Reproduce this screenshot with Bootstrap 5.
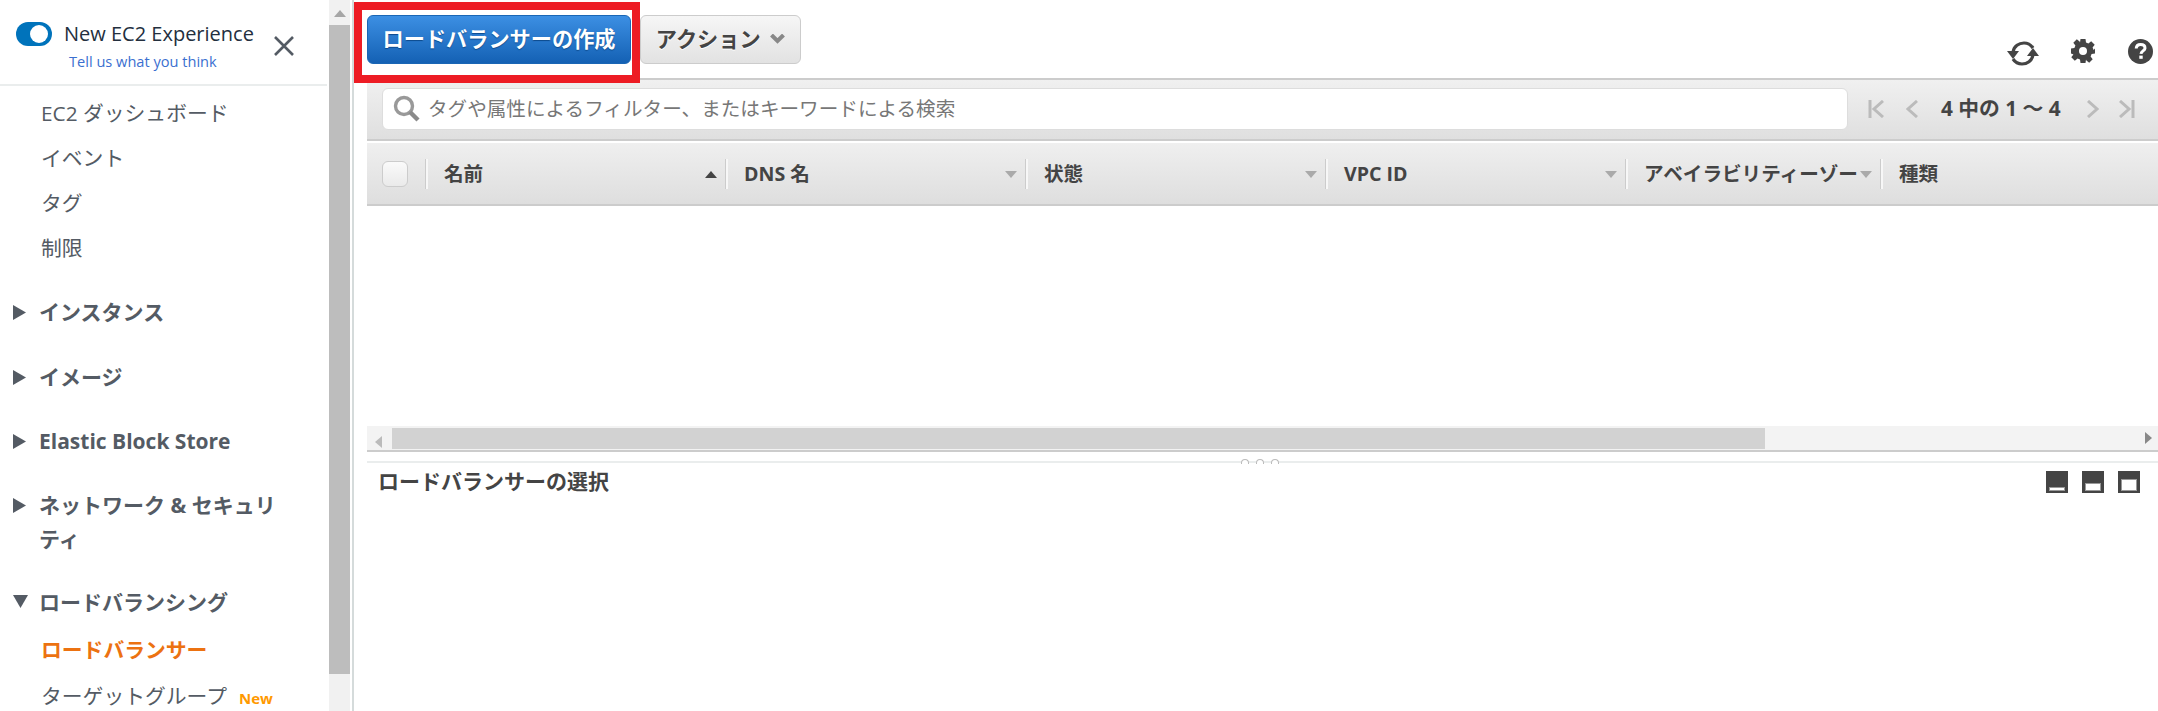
<!DOCTYPE html>
<html lang="ja">
<head>
  <meta charset="UTF-8">
  <meta name="viewport" content="width=device-width, initial-scale=1.0">
  <title>ロードバランサー</title>
  <link rel="stylesheet" href="https://cdn.jsdelivr.net/npm/bootstrap@5.3.0/dist/css/bootstrap.min.css">
  <style>
    html, body { height: 711px; overflow: hidden; }
    body { font-family: "Open Sans", "Noto Sans CJK JP", sans-serif; color: #444; background: #fff; }
    .side-panel { width: 327px; height: 711px; flex: none; overflow: hidden; }
    .xp-head { height: 86px; border-bottom: 2px solid #eaeded; padding: 22px 0 0 16px; position: relative; }
    .xp-toggle { width: 36px; height: 24px; border-radius: 12px; background: #0073bb; position: relative; flex: none; }
    .xp-toggle::after { content: ""; position: absolute; right: 4px; top: 3px; width: 18px; height: 18px; border-radius: 50%; background: #fff; }
    .xp-title { font-size: 20px; line-height: 24px; color: #232f3e; margin-left: 12px; white-space: nowrap; }
    .xp-link { font-size: 14.6px; line-height: 20px; color: #3b6fd0; margin: 5px 0 0 53px; white-space: nowrap; text-decoration: none; display: block; }
    .xp-close { position: absolute; left: 274px; top: 36px; }
    .side-links { padding-top: 5px; }
    .side-item { font-size: 20.8px; line-height: 45px; height: 45px; padding-left: 41px; color: #545b64; white-space: nowrap; }
    .side-item.active-item { color: #ec7211; font-weight: 700; height: 48px; line-height: 48px; }
    .new-tag { font-size: 15px; font-weight: 700; color: #ff9900; margin-left: 12px; }
    .side-group { font-size: 21px; line-height: 34px; font-weight: 700; color: #545b64; padding-left: 39px; position: relative; width: 290px; }
    .side-group svg { position: absolute; left: 13px; top: 10px; }
    .g1 { margin-top: 24px; }
    .g2 { margin-top: 31px; }
    .g3 { margin-top: 30px; }
    .g4 { margin-top: 30px; }
    .g5 { margin-top: 29px; margin-bottom: 7px; }
    .side-bar { width: 27px; flex: none; height: 711px; border-right: 2px solid #d5dbdb; padding-left: 2px; padding-right: 2px; background: #fff; }
    .bar-up { height: 25px; background: #f1f1f1; display: flex; justify-content: center; padding-top: 10px; }
    .bar-thumb { height: 649px; background: #bdbdbd; }
    .bar-rest { height: 37px; background: #f1f1f1; }
    .main-pane { flex: 1 1 auto; min-width: 0; position: relative; height: 711px; padding-left: 13px; }
    .red-frame { position: absolute; left: 0; top: 2px; width: 286px; height: 81px; border: 8px solid #ed1c24; pointer-events: none; }
    .top-row { height: 78px; padding-top: 15px; }
    .btn-make, .btn-act { height: 49px; padding: 0 0 2px; font-size: 21.2px; font-weight: 700; border-radius: 6px; white-space: nowrap; }
    .btn-make { width: 264px; color: #fff; background: linear-gradient(#3c8fe3, #1461b4); border: 1px solid #1a66b5; text-shadow: 0 1px 1px #0d4a8c; }
    .btn-act { width: 161px; margin-left: 9px; color: #444; background: linear-gradient(#f6f6f6, #e2e2e2); border: 1px solid #ccc; text-shadow: 0 1px 0 #fff; }
    .act-arrow { margin-left: 4px; vertical-align: 3px; }
    .top-icons { position: absolute; right: 0; top: 0; width: 160px; height: 78px; }
    .top-icons svg { position: absolute; }
    .ic-refresh { left: 9px; top: 41px; }
    .ic-gear { left: 73px; top: 39px; }
    .ic-help { left: 130px; top: 39px; }
    .filter-row { height: 63px; background: linear-gradient(#f0f0f0, #dfdfdf); border-top: 2px solid #ccc; border-bottom: 2px solid #ccc; padding-left: 15px; padding-bottom: 2px; }
    .search-box { width: 1466px; height: 42px; background: #fff; border: 1px solid #ddd; border-radius: 6px; padding-left: 10px; flex: none; }
    .search-text { font-size: 19.6px; color: #777; margin-left: 8px; white-space: nowrap; }
    .pager { width: 306px; flex: none; position: relative; height: 59px; }
    .pager svg { position: absolute; top: 21px; }
    .pg-first { left: 20px; }
    .pg-prev { left: 58px; }
    .pg-next { left: 239px; }
    .pg-last { left: 271px; }
    .pager-text { position: absolute; left: 93px; top: 0; line-height: 59px; font-size: 20.8px; font-weight: 700; color: #444; white-space: nowrap; }
    .head-row { height: 63px; margin-top: 2px; background: linear-gradient(#efefef, #dedede); border-bottom: 2px solid #ccc; }
    .check-cell { width: 59px; flex: none; height: 100%; padding-left: 15px; }
    .fake-check { width: 26px; height: 26px; border: 1px solid #ccc; border-radius: 6px; background: linear-gradient(#fafafa, #eaeaea); }
    .head-cell { width: 300px; flex: none; height: 30px; border-left: 2px solid #f7f7f7; box-shadow: -1px 0 0 #ccc; padding-left: 16px; font-size: 19.6px; font-weight: 700; line-height: 30px; color: #444; white-space: nowrap; position: relative; }
    .head-cell svg { position: absolute; right: 9px; top: 12px; }
    .cell-narrow { width: 255px; }
    .table-space { height: 220px; }
    .hscroll { height: 26px; background: #f3f3f3; border-bottom: 2px solid #ccc; padding-top: 2px; }
    .hscroll-left { width: 25px; flex: none; padding-left: 8px; }
    .hscroll-thumb { width: 1373px; height: 21px; background: #d2d2d2; flex: none; }
    .hscroll-right { position: absolute; right: 6px; top: 432px; }
    .detail-row { margin-top: 9px; border-top: 2px solid #eaeded; position: relative; height: 60px; padding-left: 11px; }
    .detail-title { font-size: 21px; font-weight: 700; color: #444; line-height: 36px; white-space: nowrap; }
    .dots { position: absolute; left: 874px; top: -4px; display: flex; gap: 7px; }
    .dots i { display: block; width: 8px; height: 5px; border: 1px solid #bbb; border-bottom: 0; border-radius: 4px 4px 0 0; background: #fff; }
    .pane-icons { position: absolute; right: 18px; top: 8px; display: flex; gap: 14px; }
    .pane-icon { width: 22px; height: 22px; background: #444; position: relative; }
    .pane-icon i { position: absolute; left: 3px; right: 3px; bottom: 2px; background: #fff; border: 1px solid #999; }
    .h1p i { height: 4px; }
    .h2p i { height: 8px; }
    .h3p i { height: 12px; }
  </style>
</head>
<body>
  <div class="d-flex">
    <div class="side-panel">
      <div class="xp-head">
        <div class="d-flex align-items-center">
          <span class="xp-toggle"></span>
          <span class="xp-title">New EC2 Experience</span>
        </div>
        <a class="xp-link" href="#">Tell us what you think</a>
        <svg class="xp-close" width="20" height="20" viewBox="0 0 20 20"><path d="M1 1L19 19M19 1L1 19" stroke="#545b64" stroke-width="2.6" fill="none"/></svg>
      </div>
      <div class="side-links">
        <div class="side-item">EC2 ダッシュボード</div>
        <div class="side-item">イベント</div>
        <div class="side-item">タグ</div>
        <div class="side-item">制限</div>
      </div>
      <div class="side-group g1"><svg width="13" height="15" viewBox="0 0 13 15"><path d="M0 0L13 7.5L0 15Z" fill="#545b64"/></svg>インスタンス</div>
      <div class="side-group g2"><svg width="13" height="15" viewBox="0 0 13 15"><path d="M0 0L13 7.5L0 15Z" fill="#545b64"/></svg>イメージ</div>
      <div class="side-group g3"><svg width="13" height="15" viewBox="0 0 13 15"><path d="M0 0L13 7.5L0 15Z" fill="#545b64"/></svg>Elastic Block Store</div>
      <div class="side-group g4"><svg width="13" height="15" viewBox="0 0 13 15"><path d="M0 0L13 7.5L0 15Z" fill="#545b64"/></svg>ネットワーク &amp; セキュリティ</div>
      <div class="side-group g5"><svg width="15" height="13" viewBox="0 0 15 13"><path d="M0 0L15 0L7.5 13Z" fill="#545b64"/></svg>ロードバランシング</div>
      <div class="side-item active-item">ロードバランサー</div>
      <div class="side-item">ターゲットグループ<span class="new-tag">New</span></div>
    </div>
    <div class="side-bar">
      <div class="bar-up"><svg width="12" height="7" viewBox="0 0 12 7"><path d="M6 0L12 7L0 7Z" fill="#a6a6a6"/></svg></div>
      <div class="bar-thumb"></div>
      <div class="bar-rest"></div>
    </div>
    <div class="main-pane">
      <div class="top-row d-flex align-items-start">
        <button class="btn btn-make" type="button">ロードバランサーの作成</button>
        <button class="btn btn-act" type="button">アクション <svg class="act-arrow" width="15" height="10" viewBox="0 0 15 10"><path d="M1.5 1L7.5 7L13.5 1" stroke="#888" stroke-width="4" fill="none"/></svg></button>
      </div>
      <div class="top-icons">
        <svg class="ic-refresh" width="32" height="25" viewBox="0 0 32 25"><path d="M6 11C7 5 12 2 17 2C21 2 24 4 26 7M26 14C25 20 20 23 15 23C11 23 8 21 6 18" stroke="#444" stroke-width="3.2" fill="none"/><path d="M0 10L12 10L6 18Z M20 15L32 15L26 7Z" fill="#444"/></svg>
        <svg class="ic-gear" width="24" height="24" viewBox="0 0 24 24"><path fill-rule="evenodd" fill="#444" d="M9.5 0H14.5L15 3.4L17.4 4.4L20.2 2.3L23.7 5.8L21.6 8.6L22.6 11L24 9.5V14.5L20.6 15L19.6 17.4L21.7 20.2L18.2 23.7L15.4 21.6L15 20.6L14.5 24H9.5L9 20.6L6.6 19.6L3.8 21.7L.3 18.2L2.4 15.4L1.4 15L0 14.5V9.5L3.4 9L4.4 6.6L2.3 3.8L5.8 .3L8.6 2.4L9 3.4ZM12 8a4 4 0 1 0 0 8a4 4 0 1 0 0-8Z"/></svg>
        <svg class="ic-help" width="25" height="25" viewBox="0 0 25 25"><circle cx="12.5" cy="12.5" r="12.5" fill="#444"/><path d="M8.2 9.5C8.4 6.9 10.2 5.6 12.6 5.6C15.2 5.6 17 7 17 9.2C17 11.6 13.2 12.2 13 14.8" stroke="#fff" stroke-width="3" fill="none"/><rect x="11.3" y="16.6" width="3.4" height="3.2" fill="#fff"/></svg>
      </div>
      <div class="filter-row d-flex align-items-center">
        <div class="search-box d-flex align-items-center">
          <svg width="27" height="27" viewBox="0 0 27 27"><circle cx="11" cy="11" r="8.5" stroke="#999" stroke-width="3.4" fill="none"/><path d="M17 17L25 25" stroke="#8a8a8a" stroke-width="4.4"/></svg>
          <span class="search-text">タグや属性によるフィルター、またはキーワードによる検索</span>
        </div>
        <div class="pager">
          <svg class="pg-first" width="16" height="18" viewBox="0 0 16 18"><path d="M2 0V18M15 1L6 9L15 17" stroke="#bbb" stroke-width="3" fill="none"/></svg>
          <svg class="pg-prev" width="12" height="18" viewBox="0 0 12 18"><path d="M11 1L2 9L11 17" stroke="#bbb" stroke-width="3" fill="none"/></svg>
          <span class="pager-text">4 中の 1 ～ 4</span>
          <svg class="pg-next" width="12" height="18" viewBox="0 0 12 18"><path d="M1 1L10 9L1 17" stroke="#bbb" stroke-width="3" fill="none"/></svg>
          <svg class="pg-last" width="16" height="18" viewBox="0 0 16 18"><path d="M14 0V18M1 1L10 9L1 17" stroke="#bbb" stroke-width="3" fill="none"/></svg>
        </div>
      </div>
      <div class="head-row d-flex align-items-center">
        <div class="check-cell d-flex align-items-center"><div class="fake-check"></div></div>
        <div class="head-cell">名前<svg width="12" height="7" viewBox="0 0 12 7"><path d="M6 0L12 7L0 7Z" fill="#444"/></svg></div>
        <div class="head-cell">DNS 名<svg width="12" height="7" viewBox="0 0 12 7"><path d="M0 0L12 0L6 7Z" fill="#aaa"/></svg></div>
        <div class="head-cell">状態<svg width="12" height="7" viewBox="0 0 12 7"><path d="M0 0L12 0L6 7Z" fill="#aaa"/></svg></div>
        <div class="head-cell">VPC ID<svg width="12" height="7" viewBox="0 0 12 7"><path d="M0 0L12 0L6 7Z" fill="#aaa"/></svg></div>
        <div class="head-cell cell-narrow">アベイラビリティーゾー<svg width="12" height="7" viewBox="0 0 12 7"><path d="M0 0L12 0L6 7Z" fill="#aaa"/></svg></div>
        <div class="head-cell">種類</div>
      </div>
      <div class="table-space"></div>
      <div class="hscroll d-flex">
        <div class="hscroll-left"><svg width="7" height="12" viewBox="0 0 7 12"><path d="M7 0L7 12L0 6Z" fill="#bbb"/></svg></div>
        <div class="hscroll-thumb"></div>
      </div>
      <svg class="hscroll-right" width="7" height="12" viewBox="0 0 7 12"><path d="M0 0L0 12L7 6Z" fill="#888"/></svg>
      <div class="detail-row">
        <div class="dots"><i></i><i></i><i></i></div>
        <div class="detail-title">ロードバランサーの選択</div>
        <div class="pane-icons">
          <div class="pane-icon h1p"><i></i></div>
          <div class="pane-icon h2p"><i></i></div>
          <div class="pane-icon h3p"><i></i></div>
        </div>
      </div>
      <div class="red-frame"></div>
    </div>
  </div>
  <script src="https://cdn.jsdelivr.net/npm/bootstrap@5.3.0/dist/js/bootstrap.bundle.min.js"></script>
</body>
</html>
